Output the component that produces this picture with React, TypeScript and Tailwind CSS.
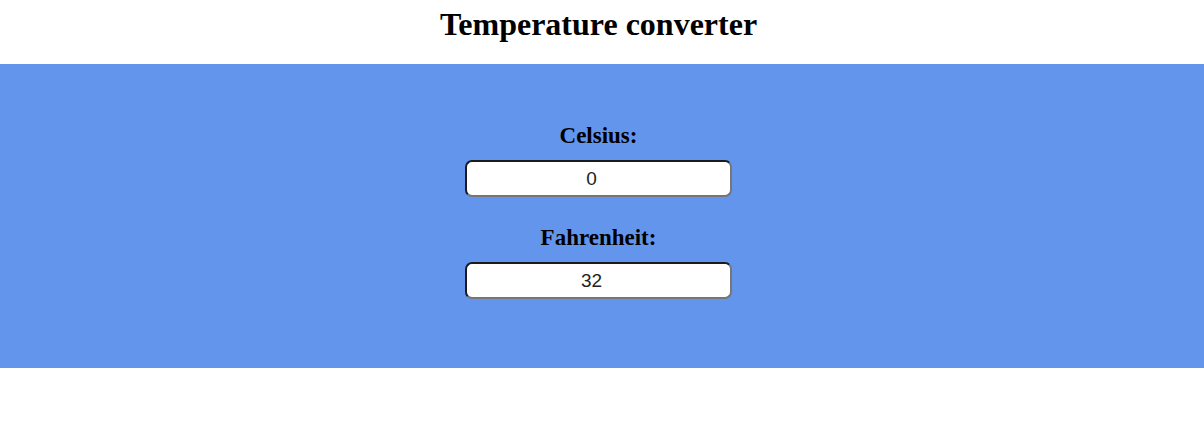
export default function App() {
  const fields = [
    { label: "Celsius:", value: "0" },
    { label: "Fahrenheit:", value: "32" },
  ]

  return (
    <div className="min-h-[421px] bg-white pr-[7px] font-['Liberation_Serif',serif] text-black">
      <h1 className="pt-[2px] pb-[18px] text-center text-[32px] leading-[44px] font-bold">Temperature converter</h1>
      <div className="-mr-[7px] flex h-[304px] flex-col items-center bg-[#6495ED] pt-[58px] pr-[7px]">
        {fields.map((f, i) => (
          <div key={f.label} className={`flex flex-col items-center ${i > 0 ? "mt-[27px]" : ""}`}>
            <label className="text-[23px] leading-[28px] font-bold">{f.label}</label>
            <input
              readOnly
              value={f.value}
              className="mt-[10px] h-[37px] w-[267px] rounded-[7px] border-2 border-t-[#1b1b1b] border-l-[#1b1b1b] border-r-[#767676] border-b-[#767676] bg-white pr-[14px] text-center font-['Liberation_Sans',sans-serif] text-[19px] text-[#222] outline-none"
            />
          </div>
        ))}
      </div>
    </div>
  )
}
